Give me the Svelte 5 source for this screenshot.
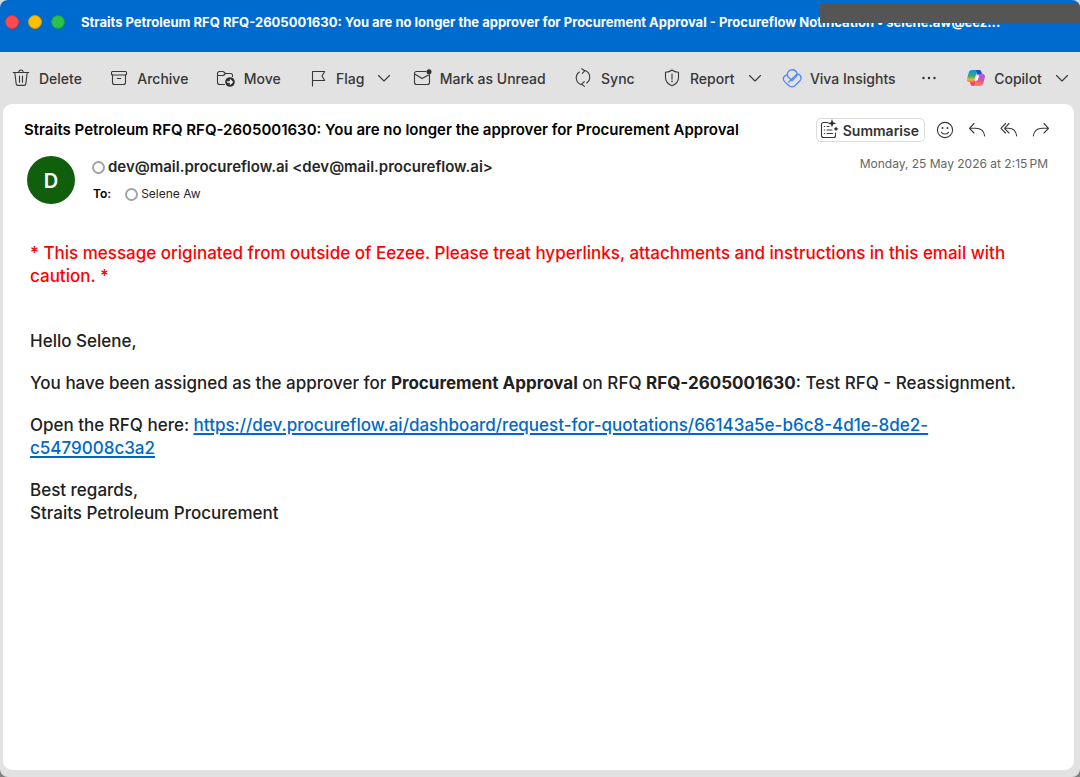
<script lang="ts">
  const subject =
    "Straits Petroleum RFQ RFQ-2605001630: You are no longer the approver for Procurement Approval";
  const link =
    "https://dev.procureflow.ai/dashboard/request-for-quotations/66143a5e-b6c8-4d1e-8de2-c5479008c3a2";

  const tools = [
    { icon: "delete", label: "Delete" },
    { icon: "archive", label: "Archive" },
    { icon: "move", label: "Move" },
    { icon: "flag", label: "Flag", menu: true },
    { icon: "unread", label: "Mark as Unread" },
    { icon: "sync", label: "Sync" },
    { icon: "report", label: "Report", menu: true },
    { icon: "viva", label: "Viva Insights" },
    { icon: "more", label: "" },
    { icon: "copilot", label: "Copilot", menu: true },
  ];

  const replies = [
    { icon: "smile", label: "React" },
    { icon: "reply", label: "Reply" },
    { icon: "replyAll", label: "Reply all" },
    { icon: "forward", label: "Forward" },
  ];
</script>

{#snippet icon(name)}
  <svg class="icon" viewBox="0 0 20 20" aria-hidden="true">
    {#if name === "delete"}
      <path d="M2.2 4.5h15.6M7.8 4.2a2.2 2.2 0 0 1 4.4 0M3.8 4.7l1.4 11.2c.1.9.7 1.5 1.6 1.5h6.4c.9 0 1.5-.6 1.6-1.5l1.4-11.2M8.5 8v6.3M11.5 8v6.3" />
    {:else if name === "archive"}
      <rect x="2.5" y="3.5" width="15" height="3.5" rx="1" />
      <path d="M3.5 7v7.5a2 2 0 0 0 2 2h9a2 2 0 0 0 2-2V7M8.3 10.5h3.4" />
    {:else if name === "move"}
      <path d="M8.5 16.5h-5a2 2 0 0 1-2-2v-9a2 2 0 0 1 2-2h3.2c.5 0 .9.2 1.2.5l1.6 1.5h5a2 2 0 0 1 2 2v1M1.5 7.5h5.2c.5 0 .9-.2 1.2-.5l1.6-1.5" />
      <circle class="solid" cx="14" cy="14" r="4.8" />
      <path class="cut" d="M11.6 14h4.5M14.3 12l2 2-2 2" />
    {:else if name === "flag"}
      <path d="M4.5 18V3.5h12.2L14 8l2.7 4.5H4.5" />
    {:else if name === "unread"}
      <path d="M14 3.5H4.5a2 2 0 0 0-2 2v9a2 2 0 0 0 2 2h11a2 2 0 0 0 2-2V6.5M2.7 6l7.3 4.5L16.5 7" />
      <circle class="solid" cx="17" cy="3.7" r="2.5" />
    {:else if name === "sync"}
      <path d="M8 16.4A7 7 0 0 1 6.3 4M12 2.6A7 7 0 0 1 13.7 15M8.7.8l3 2-2.4 2.6M11.3 13.6l-2.7 2.6 2.8 2.2" />
    {:else if name === "report"}
      <path d="M10 2c1.8 1.5 4 2.2 6.5 2.3v5.2c0 4-2.3 6.6-6.5 8.2-4.2-1.6-6.5-4.2-6.5-8.2V4.3C6 4.2 8.2 3.5 10 2ZM10 6v5.2" />
      <circle class="solid" cx="10" cy="13.4" r=".8" />
    {:else if name === "viva"}
      <g class="viva">
        <path d="M5.5 8.2 5.2 6.5a5 5 0 0 1 9.7-1.4c.4 1.3.1 2.6-.8 3.5L10 12.7 5.6 8.2" />
        <path d="m5.2 7-.9.2C1 8.2.4 11.5 2.6 13.6l3.8 3.7c2 2 5 2 7 0l4.3-4.3c3-3 .5-7.8-3-6.4L6.7 14" />
      </g>
    {:else if name === "more"}
      <circle class="solid" cx="4.5" cy="10" r="1.2" />
      <circle class="solid" cx="10" cy="10" r="1.2" />
      <circle class="solid" cx="15.5" cy="10" r="1.2" />
    {:else if name === "copilot"}
      <defs>
        <linearGradient id="cool" x1="0" y1="0" x2="0" y2="1">
          <stop offset="0" stop-color="#138de8" />
          <stop offset=".5" stop-color="#35a879" />
          <stop offset=".8" stop-color="#e8bd20" />
          <stop offset="1" stop-color="#f37532" />
        </linearGradient>
        <linearGradient id="warm" x1="0.6" y1="0" x2="0.3" y2="1">
          <stop offset="0" stop-color="#a15bea" />
          <stop offset=".5" stop-color="#e55391" />
          <stop offset="1" stop-color="#ff8a4c" />
        </linearGradient>
      </defs>
      <path fill="url(#warm)" stroke="none" d="M12.5 6h4c2 0 2.9 1.5 2.4 3.3l-1.5 5.700c-.6 2-1.7 3-3.5 3H6.500c2 0 2.700-1.200 3.200-3l1.500-6c.3-1.400.4-2.300 1.300-3Z" />
      <path fill="url(#cool)" stroke="none" d="M6 2h7c-1.5.4-2.1 1.4-2.6 3L8.7 11c-.6 2.2-1.3 3-3 3H3.200C1.200 14 .6 12.600 1.100 10.700L2.600 5C3.100 3 4.200 2 6 2Z" />
      <path fill="#1555c0" stroke="none" d="M9.5 2h3.7c1.3 0 1.9.9 2.2 2l.6 2h-3c-1.2 0-1.8.4-2.2 1.2C10.500 5 11 3.400 9.500 2Z" />
      <path fill="#ef4a62" stroke="none" d="M4 14h1.8c1.5 0 2.5-.7 3-2l.9 1.5c-.5 2.8-.8 4.5-3 4.5-1.5 0-2.2-.9-2.7-4Z" />
      <path fill="#fff" stroke="none" d="M11.3 7.5h2L11.500 12.500h-2.300Z" />
    {:else if name === "summarise"}
      <path d="M9 2.500H4.500a2 2 0 0 0-2 2v11a2 2 0 0 0 2 2h10a2 2 0 0 0 2-2V13M5.300 6.500h.4M8 6.500h2M5.300 10h.4M8 10h5M5.300 13.500h.4M8 13.500h5.500" />
      <path class="solid" d="m13-1 1.100 3.200 3.200 1.100-3.200 1.100L13 7.600l-1.100-3.200-3.200-1.100 3.200-1.100ZM17 6.200l.8 1.900 1.900.8-1.900.8-.8 1.900-.8-1.900-1.900-.8 1.900-.8Z" />
    {:else if name === "smile"}
      <circle cx="10" cy="10" r="7.6" />
      <path d="M6.5 12.3c1.7 2.3 5.3 2.3 7 0" />
      <circle class="solid" cx="7.5" cy="8" r="1" />
      <circle class="solid" cx="12.5" cy="8" r="1" />
    {:else if name === "reply"}
      <path d="M7 3.5 2.5 8.3 7 13M2.5 8.3h6c5 0 8.5 2.4 9.2 7.7" />
    {:else if name === "replyAll"}
      <path d="M6.5 3.5 2 8.3 6.5 13M10 3.5 5.5 8.3 10 13M5.5 8.3h4c4.5 0 7.5 2.4 8.2 7.7" />
    {:else if name === "forward"}
      <path d="m13 3.5 4.5 4.8L13 13M17.5 8.3h-6c-5 0-8.5 2.4-9.2 7.7" />
    {/if}
  </svg>
{/snippet}

<main class="window">
  <header class="titlebar">
    <div class="lights">
      <button class="light close" aria-label="Close"></button>
      <button class="light minimise" aria-label="Minimise"></button>
      <button class="light zoom" aria-label="Zoom"></button>
    </div>
    <div class="title">{subject} - Procureflow Notification • selene.aw@eez...</div>
    <div class="redaction"></div>
  </header>

  <nav class="toolbar">
    {#each tools as tool}
      <button class="tool" class:compact={!tool.label} aria-label={tool.label || "More"}>
        {@render icon(tool.icon)}
        {#if tool.label}<span>{tool.label}</span>{/if}
        {#if tool.menu}
          <svg class="chevron" viewBox="0 0 14 14" aria-hidden="true">
            <path d="m1.5 4.5 5.5 5.5 5.5-5.5" />
          </svg>
        {/if}
      </button>
    {/each}
  </nav>

  <article class="mail">
    <div class="subject-row">
      <h1>{subject}</h1>
      <div class="actions">
        <button class="summarise">{@render icon("summarise")}Summarise</button>
        <div class="replies">
          {#each replies as reply}
            <button class="reply" aria-label={reply.label}>{@render icon(reply.icon)}</button>
          {/each}
        </div>
      </div>
    </div>

    <div class="sender-row">
      <div class="avatar">D</div>
      <div class="people">
        <div class="from">
          <span class="presence"></span>dev@mail.procureflow.ai &lt;dev@mail.procureflow.ai&gt;
        </div>
        <div class="to">
          <b>To:</b><span class="presence"></span>Selene Aw
        </div>
      </div>
      <time datetime="2026-05-25T14:15">Monday, 25 May 2026 at 2:15&#8239;PM</time>
    </div>

    <div class="body">
      <p class="warning">
        * This message originated from outside of Eezee. Please treat hyperlinks, attachments and
        instructions in this email with caution. *
      </p>
      <p>Hello Selene,</p>
      <p>
        You have been assigned as the approver for <b>Procurement Approval</b> on RFQ
        <b>RFQ-2605001630</b>: Test RFQ - Reassignment.
      </p>
      <p>Open the RFQ here: <a href={link}>{link}</a></p>
      <p>Best regards,<br />Straits Petroleum Procurement</p>
    </div>
  </article>
</main>

<style>
  :global(body) {
    margin: 0;
    background: linear-gradient(#d8d8d8, #808080);
  }

  .window {
    display: flex;
    flex-direction: column;
    min-height: 100vh;
    border-radius: 8px;
    overflow: hidden;
    background: #e2e2e2;
    font-family: Inter, "Liberation Sans", sans-serif;
    color: #262626;
  }

  button {
    margin: 0;
    padding: 0;
    border: none;
    background: none;
    font: inherit;
    color: inherit;
  }

  .icon,
  .chevron {
    flex: none;
    width: 20px;
    height: 20px;
    fill: none;
    stroke: #383838;
    stroke-width: 1.1;
    stroke-linecap: round;
    stroke-linejoin: round;
    overflow: visible;
  }

  .icon .solid {
    fill: #303030;
    stroke: none;
  }

  .icon .cut {
    stroke: #fff;
    stroke-width: 1.3;
  }

  .icon .viva {
    stroke: #4f87ff;
    stroke-width: 1.3;
  }

  .chevron {
    width: 14px;
    height: 14px;
    margin: 0 -7px 0 5px;
  }

  .titlebar {
    position: relative;
    display: flex;
    align-items: center;
    gap: 16px;
    height: 44px;
    padding: 0 5px 8px;
    background: #006bce;
  }

  .lights {
    display: flex;
    gap: 9px;
  }

  .light {
    width: 14px;
    height: 14px;
    border-radius: 50%;
    border: 1px solid #e0303a;
    background: #ff4b50;
  }

  .light.minimise {
    border-color: #d69a00;
    background: #fdbf00;
  }

  .light.zoom {
    border-color: #1b9a3c;
    background: #2cc04c;
  }

  .title {
    font-size: 13px;
    font-weight: 700;
    line-height: 16px;
    color: #fff;
    white-space: nowrap;
  }

  .redaction {
    position: absolute;
    top: 3px;
    right: 0;
    width: 260px;
    height: 20px;
    background: #555;
  }

  .toolbar {
    display: flex;
    align-items: center;
    justify-content: space-between;
    height: 52px;
    padding: 0 18px 0 11px;
    font-size: 14px;
    font-weight: 500;
    color: #363636;
    white-space: nowrap;
  }

  .tool {
    display: flex;
    align-items: center;
    gap: 8px;
  }

  .tool.compact {
    margin-left: -4px;
  }

  .mail {
    flex: 1;
    margin: 0 6px 7px 3px;
    border-radius: 9px;
    background: #fff;
  }

  .subject-row {
    display: flex;
    justify-content: space-between;
    align-items: center;
    padding: 14px 23px 0 21px;
  }

  h1 {
    margin: 0;
    font-size: 15px;
    font-weight: 600;
    line-height: 24px;
    color: #000;
  }

  .actions {
    display: flex;
    align-items: center;
    gap: 10px;
  }

  .summarise {
    display: flex;
    align-items: center;
    gap: 4px;
    height: 24px;
    padding: 0 5px 0 2px;
    border: 1px solid #dcdcdc;
    border-radius: 5px;
    font-size: 14px;
    font-weight: 600;
    color: #333;
  }

  .replies {
    display: flex;
    gap: 12px;
  }

  .reply {
    display: flex;
  }

  .sender-row {
    display: flex;
    align-items: flex-start;
    padding: 14px 26px 0 24px;
  }

  .avatar {
    width: 48px;
    height: 48px;
    border-radius: 50%;
    background: #105f0c;
    color: #fff;
    font-size: 20px;
    font-weight: 600;
    line-height: 50px;
    text-align: center;
  }

  .people {
    flex: 1;
    padding: 1px 0 0 17px;
  }

  .from,
  .to {
    display: flex;
    align-items: center;
  }

  .from {
    gap: 3px;
    font-size: 15px;
    font-weight: 600;
    line-height: 20px;
  }

  .to {
    gap: 3px;
    margin-top: 8px;
    padding-left: 1px;
    font-size: 12px;
    line-height: 18px;
  }

  .to b {
    margin-right: 11px;
    font-weight: 600;
    color: #000;
  }

  .presence {
    box-sizing: border-box;
    width: 13px;
    height: 13px;
    border: 2px solid #a3a3a3;
    border-radius: 50%;
  }

  time {
    font-size: 12px;
    line-height: 16px;
    color: #666;
  }

  .body {
    padding: 38px 27px 0;
    font-size: 17px;
    font-weight: 500;
    line-height: 23px;
    color: #212121;
  }

  p {
    margin: 0 0 19px;
  }

  .warning {
    margin-bottom: 42px;
    color: #f00;
  }

  a {
    color: #0069c8;
    text-underline-offset: 2px;
    text-decoration-thickness: 2px;
  }
</style>
